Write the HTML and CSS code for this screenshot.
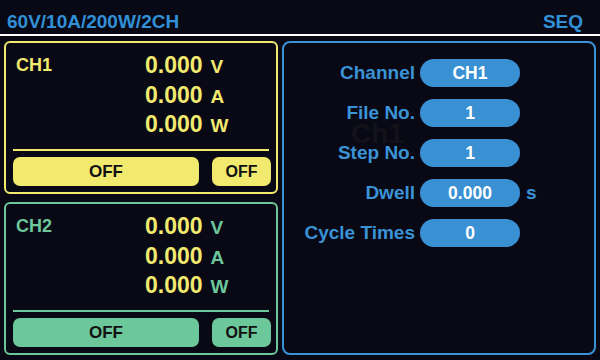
FILE: index.html
```html
<!DOCTYPE html>
<html lang="en">
<head>
  <meta charset="UTF-8">
  <title>SEQ</title>
  <link rel="stylesheet" href="styles.css">
</head>
<body>
  <div class="screen">
    <!-- Kopfzeile -->
    <div class="top-bar">
      <span>60V/10A/200W/2CH</span>
      <span>SEQ</span>
    </div>

    <div class="main">
      <!-- Kanäle -->
      <div class="channels">
        <div class="card ch1">
          <div class="readout">
            <span class="ch-name">CH1</span>
            <span class="val">0.000</span><span class="unit">V</span>
            <span></span>
            <span class="val">0.000</span><span class="unit">A</span>
            <span></span>
            <span class="val">0.000</span><span class="unit">W</span>
          </div>
          <div class="sep"></div>
          <div class="btn-row">
            <div class="btn btn-wide">OFF</div>
            <div class="btn btn-small">OFF</div>
          </div>
        </div>

        <div class="card ch2">
          <div class="readout">
            <span class="ch-name">CH2</span>
            <span class="val">0.000</span><span class="unit">V</span>
            <span></span>
            <span class="val">0.000</span><span class="unit">A</span>
            <span></span>
            <span class="val">0.000</span><span class="unit">W</span>
          </div>
          <div class="sep"></div>
          <div class="btn-row">
            <div class="btn btn-wide">OFF</div>
            <div class="btn btn-small">OFF</div>
          </div>
        </div>
      </div>

      <!-- Sequenz-Einstellungen -->
      <div class="seq-panel">
        <div class="ghost">Ch1</div>
        <div class="seq-grid">
          <span class="seq-label">Channel</span>
          <span class="pill">CH1</span>
          <span></span>

          <span class="seq-label">File No.</span>
          <span class="pill">1</span>
          <span></span>

          <span class="seq-label">Step No.</span>
          <span class="pill">1</span>
          <span></span>

          <span class="seq-label">Dwell</span>
          <span class="pill">0.000</span>
          <span class="seq-unit">s</span>

          <span class="seq-label">Cycle Times</span>
          <span class="pill">0</span>
          <span></span>
        </div>
      </div>
    </div>
  </div>
</body>
</html>
```

FILE: styles.css
```css
body {
  margin: 0;
  background: #090916;
  font-family: 'Liberation Sans', Arial, sans-serif;
  font-weight: bold;
}
.screen {
  width: 600px;
  height: 360px;
  display: flex;
  flex-direction: column;
  background: #090916;
}
.top-bar {
  height: 23px;
  padding: 11px 17px 0 7px;
  display: flex;
  justify-content: space-between;
  font-size: 19px;
  line-height: 22px;
  color: #3190d6;
  border-bottom: 2px solid #ffffff;
}
.main {
  flex: 1;
  display: flex;
  gap: 4px;
  padding: 5px 4px 5px 4px;
  min-height: 0;
}
.channels {
  width: 274px;
  display: flex;
  flex-direction: column;
  gap: 8px;
}
.card {
  flex: 1;
  border: 2px solid;
  border-radius: 6px;
  padding: 8px 5px 0 7px;
}
.ch1 { border-color: #f2ea6e; }
.ch2 { border-color: #6cc79a; }

.readout {
  display: grid;
  grid-template-columns: 124px auto auto;
  grid-auto-rows: 29.5px;
  column-gap: 8px;
  justify-content: start;
  align-items: baseline;
  line-height: 29.5px;
}
.ch-name {
  align-self: start;
  font-size: 18px;
  line-height: 28px;
  padding-left: 3px;
}
.val {
  font-size: 23px;
  color: #f2ea6e;
}
.unit {
  font-size: 19px;
}
.ch1 .ch-name, .ch1 .unit { color: #f2ea6e; }
.ch2 .ch-name, .ch2 .unit { color: #6cc79a; }

.sep {
  height: 2px;
  margin: 9px 2px 0 0;
}
.ch1 .sep { background: #f2ea6e; }
.ch2 .sep { background: #6cc79a; }

.btn-row {
  display: flex;
  gap: 13px;
  margin-top: 6px;
}
.btn {
  height: 29px;
  line-height: 30px;
  border-radius: 7px;
  text-align: center;
  color: #111111;
}
.btn-wide {
  width: 186px;
  font-size: 17px;
}
.btn-small {
  width: 59px;
  font-size: 16px;
}
.ch1 .btn { background: #f2ea6e; }
.ch2 .btn { background: #6cc79a; }

.seq-panel {
  flex: 1;
  position: relative;
  border: 2px solid #3a93d6;
  border-radius: 8px;
  padding-top: 16px;
}
.seq-grid {
  display: grid;
  grid-template-columns: 131px 100px auto;
  column-gap: 5px;
  row-gap: 12px;
  align-items: center;
}
.seq-label {
  font-size: 19px;
  color: #3a93d6;
  text-align: right;
}
.pill {
  height: 28px;
  line-height: 29px;
  border-radius: 14px;
  background: #3990d3;
  color: #ffffff;
  text-align: center;
  font-size: 17.5px;
}
.seq-unit {
  font-size: 19px;
  color: #3a93d6;
  padding-left: 1px;
}
/* Geisterbild auf dem Display */
.ghost {
  position: absolute;
  left: 67px;
  top: 77px;
  font-size: 28px;
  line-height: 28px;
  color: #121218;
}
```
